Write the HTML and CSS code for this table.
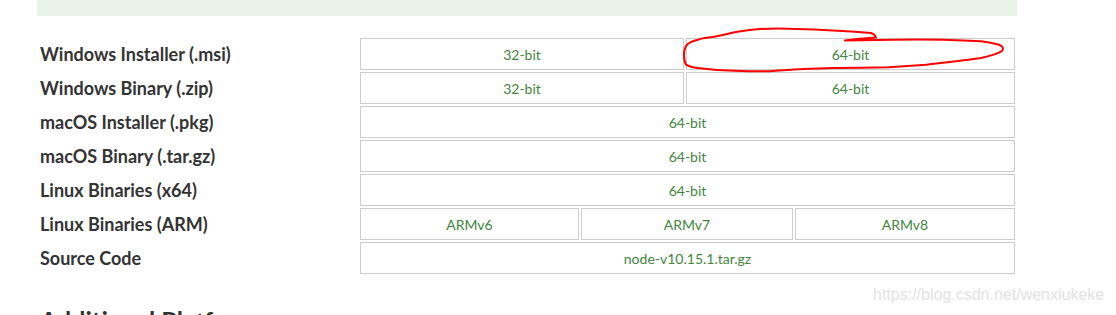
FILE: index.html
```html
<!DOCTYPE html>
<html>
<head>
<meta charset="utf-8">
<link rel="stylesheet" href="styles.css">
</head>
<body>
<div class="page">
  <div class="banner"></div>
  <div class="matrix">
    <div class="row">
      <div class="label">Windows Installer (.msi)</div>
      <div class="cells">
        <a class="cell w-a">32-bit</a>
        <a class="cell w-b">64-bit</a>
      </div>
    </div>
    <div class="row">
      <div class="label">Windows Binary (.zip)</div>
      <div class="cells">
        <a class="cell w-a">32-bit</a>
        <a class="cell w-b">64-bit</a>
      </div>
    </div>
    <div class="row">
      <div class="label">macOS Installer (.pkg)</div>
      <div class="cells"><a class="cell full">64-bit</a></div>
    </div>
    <div class="row">
      <div class="label">macOS Binary (.tar.gz)</div>
      <div class="cells"><a class="cell full">64-bit</a></div>
    </div>
    <div class="row">
      <div class="label">Linux Binaries (x64)</div>
      <div class="cells"><a class="cell full">64-bit</a></div>
    </div>
    <div class="row">
      <div class="label">Linux Binaries (ARM)</div>
      <div class="cells">
        <a class="cell arm-a">ARMv6</a>
        <a class="cell arm-b">ARMv7</a>
        <a class="cell arm-c">ARMv8</a>
      </div>
    </div>
    <div class="row">
      <div class="label">Source Code</div>
      <div class="cells"><a class="cell full">node-v10.15.1.tar.gz</a></div>
    </div>
  </div>
  <h2 class="heading">Additional Platforms</h2>
</div>
<svg class="scribble" width="1116" height="315" viewBox="0 0 1116 315">
  <path d="M845 40.5 C856 39 868 38 876 37.5 C875 35 873 33.5 871 33 C845 31 815 29.5 797 29 C785 28.5 770 28.5 760 29 C748 30 738 31.5 731 33 C724 35 718 36 712.5 37 C706 38 701 38.5 698 39.7 C692 41 689 42.5 687 44.7 C684.5 48 684 51 684 54.7 C684 58 684.5 62 686 64.7 C689 66.5 693 67.5 698 68 C710 69.5 722 70.5 734.5 70.7 C746 71.2 757 71.5 767.6 71.3 C780 70.5 792 69.5 804 69 C814 68.5 824 68.2 834 68 C852 67.8 871 67.6 889 67.3 C902 66.5 914 65.5 926 64.7 C945 62.5 964 60.5 981 58 C990 56 998 54 1002 51 C1004 48.5 1002.5 46 999 44.7 C993 43 987 42 981 41.3 C969 40.5 957 40 944 39.7 C927 39.5 910 39.5 893 39.7 C877 39.9 861 40.1 845 40.5"
        fill="none" stroke="#f00" stroke-width="2" stroke-linecap="round" stroke-linejoin="round"/>
</svg>
<div class="watermark">https://blog.csdn.net/wenxiukeke</div>
</body>
</html>
```

FILE: styles.css
```css
html, body {
  margin: 0;
  padding: 0;
  background: #fff;
  overflow: hidden;
}

body {
  width: 1116px;
  height: 315px;
  position: relative;
  font-family: "Lato", "Open Sans", sans-serif;
}

.page {
  margin-left: 37px;
  width: 980px;
}

.banner {
  height: 16px;
  background: #e9f4e8;
}

.matrix {
  margin-top: 22px;
  display: flex;
  flex-direction: column;
  gap: 2px;
}

.row {
  display: flex;
  align-items: center;
  height: 32px;
}

.label {
  width: 323px;
  padding-left: 3px;
  box-sizing: border-box;
  font-size: 18px;
  font-weight: 700;
  color: #333;
  letter-spacing: 0;
}

.cells {
  width: 655px;
  height: 32px;
  display: flex;
  gap: 2px;
}

.cell {
  box-sizing: border-box;
  height: 32px;
  border: 1px solid #ccc;
  display: flex;
  align-items: center;
  justify-content: center;
  font-size: 14px;
  color: #43853d;
  text-decoration: none;
}

.w-a { width: 324px; }
.w-b { width: 329px; }
.full { width: 655px; }
.arm-a { width: 219px; }
.arm-b { width: 212px; }
.arm-c { width: 220px; }

.heading {
  margin: 31px 0 0 3px;
  font-size: 25px;
  font-weight: 700;
  color: #333;
  line-height: 30px;
}

.scribble {
  position: absolute;
  left: 0;
  top: 0;
  pointer-events: none;
}

.watermark {
  position: absolute;
  left: 873px;
  top: 286px;
  font-family: "Liberation Sans", Arial, sans-serif;
  font-size: 16px;
  color: #e2e2e2;
  white-space: nowrap;
}
```
